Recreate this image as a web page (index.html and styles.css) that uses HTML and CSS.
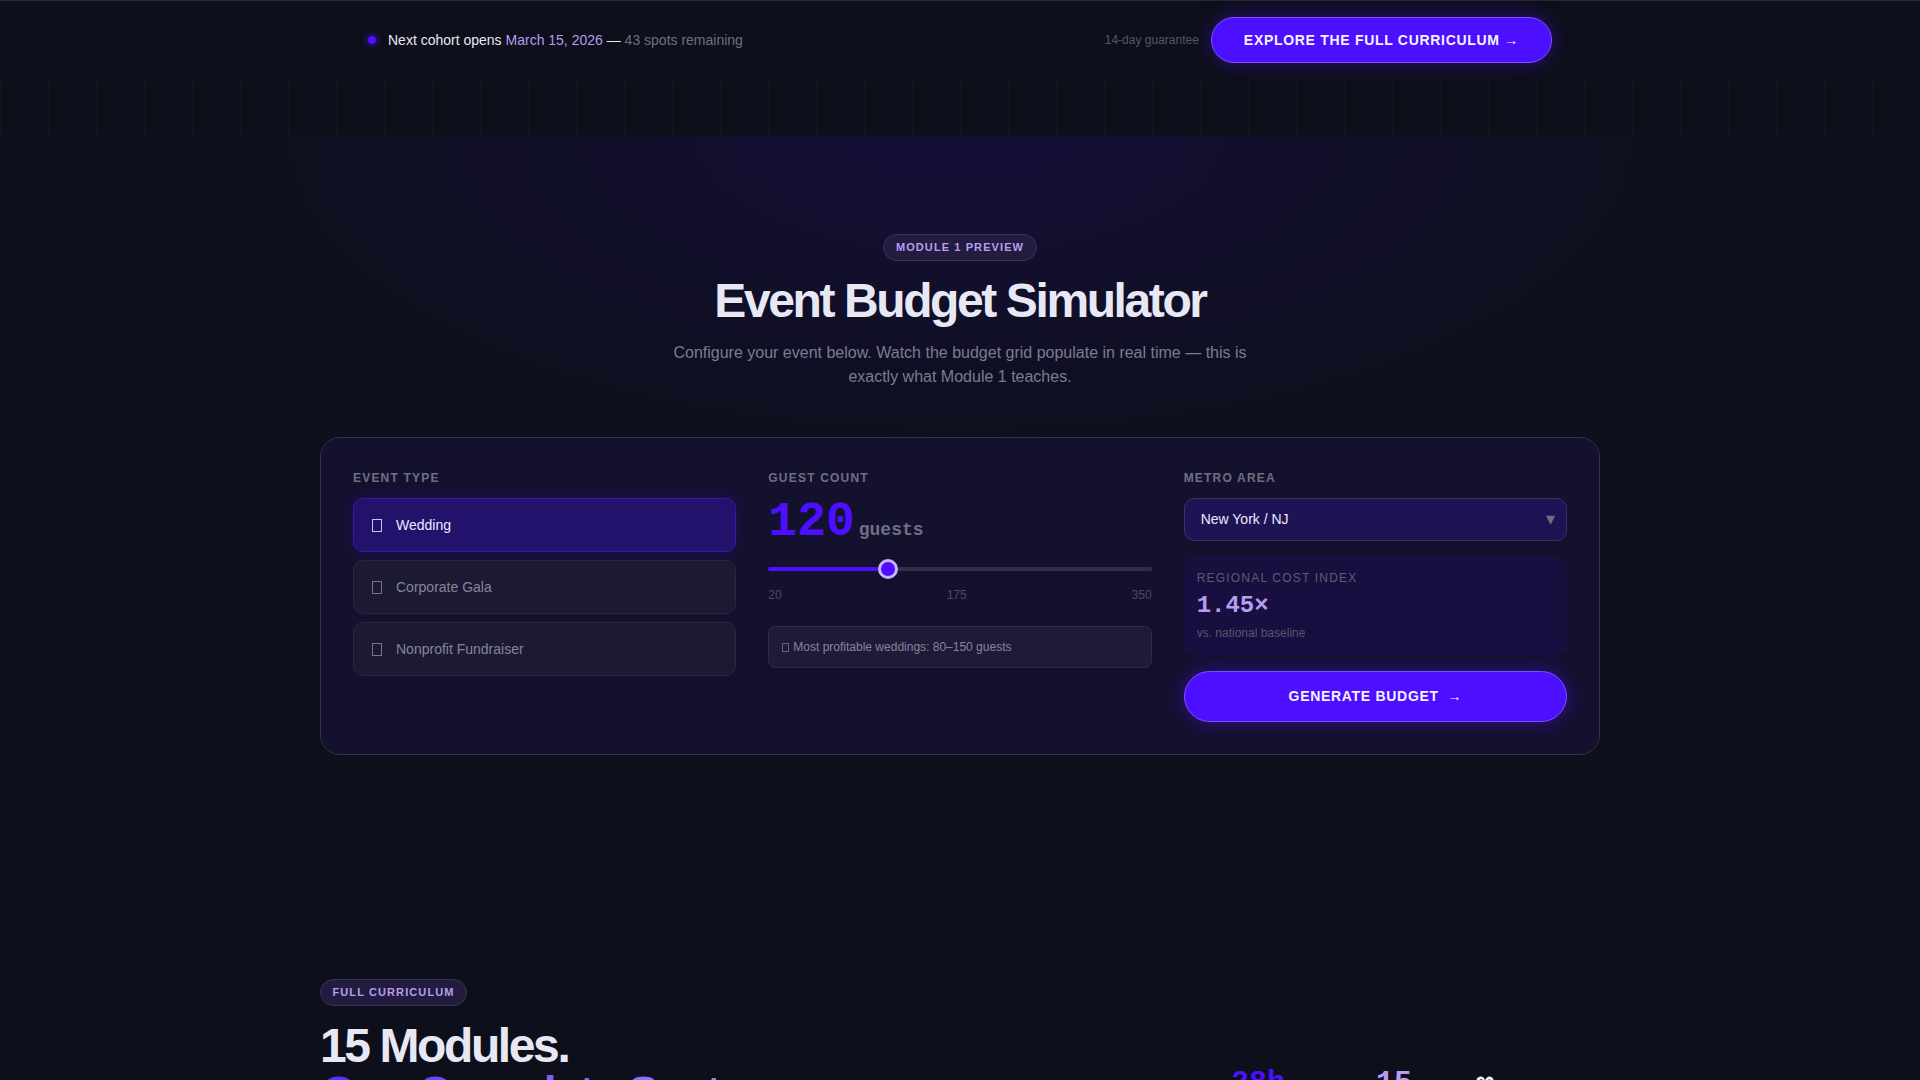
FILE: index.html
```html
<!DOCTYPE html>
<html lang="en">
<head>
    <meta charset="UTF-8">
    <meta name="viewport" content="width=device-width, initial-scale=1.0">
    <title>Event Budget Simulator</title>
    <link rel="stylesheet" href="styles.css">
</head>
<body>
    <header class="topbar">
        <div class="topbar-inner">
            <div class="cohort">
                <span class="cohort-dot"></span>
                <span>Next cohort opens <span class="cohort-date">March 15, 2026</span> — <span class="cohort-spots">43 spots remaining</span></span>
            </div>
            <div class="topbar-actions">
                <span class="guarantee">14-day guarantee</span>
                <a class="btn btn-top" href="#curriculum">Explore the Full Curriculum <span class="btn-arrow">→</span></a>
            </div>
        </div>
    </header>

    <div class="grid-strip"></div>

    <section class="simulator">
        <div class="section-head">
            <span class="pill">Module 1 Preview</span>
            <h2 class="sim-title">Event Budget Simulator</h2>
            <p class="sim-sub">Configure your event below. Watch the budget grid populate in real time — this is exactly what Module 1 teaches.</p>
        </div>

        <div class="sim-card">
            <div class="sim-col">
                <div class="field-label">Event Type</div>
                <div class="options">
                    <button class="option active"><span class="option-icon"></span>Wedding</button>
                    <button class="option"><span class="option-icon"></span>Corporate Gala</button>
                    <button class="option"><span class="option-icon"></span>Nonprofit Fundraiser</button>
                </div>
            </div>

            <div class="sim-col">
                <div class="field-label">Guest Count</div>
                <div class="guest-value">120<span class="guest-unit">guests</span></div>
                <input class="guest-range" type="range" min="20" max="350" value="120">
                <div class="range-labels"><span>20</span><span>175</span><span>350</span></div>
                <div class="hint"><span class="hint-icon"></span>Most profitable weddings: 80–150 guests</div>
            </div>

            <div class="sim-col">
                <div class="field-label">Metro Area</div>
                <div class="select-wrap">
                    <select class="metro-select">
                        <option>New York / NJ</option>
                        <option>Los Angeles</option>
                        <option>Chicago</option>
                    </select>
                </div>
                <div class="cost-box">
                    <div class="cost-label">Regional Cost Index</div>
                    <div class="cost-value">1.45×</div>
                    <div class="cost-note">vs. national baseline</div>
                </div>
                <button class="btn btn-generate">Generate Budget <span class="btn-arrow">→</span></button>
            </div>
        </div>
    </section>

    <section class="curriculum" id="curriculum">
        <div class="curriculum-head">
            <div>
                <span class="pill">Full Curriculum</span>
                <h2 class="curriculum-title">15 Modules.<br><span class="accent">One Complete System.</span></h2>
            </div>
            <div class="stats">
                <div class="stat stat-hours">28h</div>
                <div class="stat stat-modules">15</div>
                <div class="stat stat-access">∞</div>
            </div>
        </div>
    </section>
</body>
</html>
```

FILE: styles.css
```css
* {
    box-sizing: border-box;
}
html, body {
    height: 100%;
    overflow: hidden;
}
body {
    font-family: 'Liberation Sans', Arial, sans-serif;
    margin: 0;
    background-color: #0d0f1a;
    color: #e8e8f5;
}
.topbar {
    height: 80px;
    padding-bottom: 1px;
    border-top: 1px solid #252836;
    background-color: #0d0f1a;
}
.topbar-inner {
    max-width: 1184px;
    height: 100%;
    margin: 0 auto;
    display: flex;
    align-items: center;
    justify-content: space-between;
}
.cohort {
    display: flex;
    align-items: center;
    gap: 12px;
    font-size: 14px;
    color: #e8e8f5;
}
.cohort-dot {
    width: 8px;
    height: 8px;
    border-radius: 50%;
    background-color: #4d0fff;
    box-shadow: 0 0 8px #4d0fff;
}
.cohort-date {
    color: #b79cf0;
}
.cohort-spots {
    color: #6f6f82;
}
.topbar-actions {
    display: flex;
    align-items: center;
    gap: 12px;
}
.guarantee {
    font-size: 12px;
    color: #55566a;
}
.btn {
    display: block;
    border: 1px solid #7a50ff;
    border-radius: 999px;
    background-color: #4d0fff;
    color: #f5f2ff;
    font-family: inherit;
    font-weight: 700;
    font-size: 14px;
    letter-spacing: 0.05em;
    text-align: center;
    text-transform: uppercase;
    text-decoration: none;
    box-shadow: 0 0 20px rgba(77, 15, 255, 0.45);
}
.btn-arrow {
    margin-left: 4px;
    font-weight: 400;
}
.btn-top {
    padding: 14px 32px;
}
.btn-top .btn-arrow {
    margin-left: 0;
}
.grid-strip {
    height: 56px;
    background-image:
        linear-gradient(rgba(255, 255, 255, 0.012) 1px, transparent 1px),
        linear-gradient(90deg, rgba(255, 255, 255, 0.02) 1px, transparent 1px);
    background-size: 48px 48px;
}
.simulator {
    padding: 98px 0 224px;
    background: radial-gradient(ellipse 800px 350px at 50% 0, #140f38, transparent);
}
.section-head {
    text-align: center;
}
.pill {
    display: inline-block;
    padding: 7px 11.5px;
    border: 1px solid #3b3358;
    border-radius: 999px;
    background-color: #231c3f;
    color: #b79cf0;
    font-size: 11px;
    font-weight: 700;
    line-height: 11px;
    letter-spacing: 0.1em;
    text-transform: uppercase;
}
.sim-title {
    margin: 10px 0 10px;
    color: #e8e8f5;
    font-size: 48px;
    line-height: 60px;
    letter-spacing: -0.05em;
}
.sim-sub {
    width: 600px;
    margin: 0 auto;
    color: #7c7c90;
    font-size: 16px;
    line-height: 24px;
}
.sim-card {
    display: grid;
    grid-template-columns: repeat(3, 1fr);
    gap: 32px;
    width: 1280px;
    margin: 48px auto 0;
    padding: 32px;
    border: 1px solid #34324a;
    border-radius: 20px;
    background-color: #14112e;
}
.field-label {
    margin-bottom: 13px;
    padding-top: 1px;
    color: #6f6f82;
    font-size: 12px;
    font-weight: 700;
    line-height: 15px;
    letter-spacing: 0.1em;
    text-transform: uppercase;
}
.options {
    display: flex;
    flex-direction: column;
    gap: 8px;
    margin-top: -1px;
}
.option {
    display: flex;
    align-items: center;
    height: 54px;
    padding: 0 16px;
    border: 1px solid #29263f;
    border-radius: 10px;
    background-color: #1c1933;
    color: #85859a;
    font-family: inherit;
    font-size: 14px;
    text-align: left;
}
.option.active {
    border-color: #3a14b0;
    background-color: #23126b;
    color: #ece8ff;
    box-shadow: 0 0 16px rgba(77, 15, 255, 0.2);
}
/* missing-glyph box next to each option */
.option-icon {
    width: 10px;
    height: 13px;
    margin: 0 14px 0 2px;
    border: 1px solid currentColor;
    opacity: 0.85;
}
.guest-value {
    margin-top: -1px;
    color: #4d0fff;
    font-family: 'Liberation Mono', monospace;
    font-size: 48px;
    font-weight: 700;
    line-height: 48px;
}
.guest-unit {
    margin-left: 4px;
    color: #6f6f82;
    font-size: 18px;
    line-height: 18px;
}
.guest-range {
    display: block;
    width: 100%;
    height: 4px;
    margin: 21px 0 0;
    border-radius: 2px;
    background: linear-gradient(90deg, #4d0fff 0, #4d0fff 31%, #322e4d 31%, #322e4d 100%);
    appearance: none;
    -webkit-appearance: none;
}
.guest-range::-webkit-slider-thumb {
    width: 20px;
    height: 20px;
    border: 3px solid #c9b3ff;
    border-radius: 50%;
    background-color: #4d0fff;
    appearance: none;
    -webkit-appearance: none;
}
.range-labels {
    display: flex;
    justify-content: space-between;
    margin-top: 17px;
    color: #4c4c60;
    font-size: 12px;
    line-height: 14px;
}
.hint {
    display: flex;
    align-items: center;
    margin-top: 24px;
    padding: 13px 13px;
    border: 1px solid #2f2b47;
    border-radius: 8px;
    background-color: #1f1a38;
    color: #85859a;
    font-size: 12px;
    line-height: 14px;
}
.hint-icon {
    width: 7px;
    height: 9px;
    margin-right: 4px;
    border: 1px solid currentColor;
    opacity: 0.7;
}
.select-wrap {
    position: relative;
    margin-top: -1px;
}
.select-wrap::after {
    content: "▾";
    position: absolute;
    top: 10px;
    right: 12px;
    color: #6f6f82;
    font-size: 18px;
    line-height: 22px;
    pointer-events: none;
}
.metro-select {
    display: block;
    width: 100%;
    height: 43px;
    padding: 0 16px 2px;
    border: 1px solid #3b3358;
    border-radius: 10px;
    background-color: #1e1455;
    color: #ece8ff;
    font-family: inherit;
    font-size: 14px;
    appearance: none;
    -webkit-appearance: none;
}
.cost-box {
    height: 98px;
    margin-top: 16px;
    padding: 13px 12px;
    border: 1px solid #1b1440;
    border-radius: 10px;
    background-color: #170f3f;
}
.cost-label {
    color: #5e5c75;
    font-size: 12px;
    line-height: 14px;
    letter-spacing: 0.1em;
    text-transform: uppercase;
}
.cost-value {
    margin-top: 7px;
    color: #b79cf0;
    font-family: 'Liberation Mono', monospace;
    font-size: 24px;
    font-weight: 700;
    line-height: 28px;
}
.cost-note {
    margin-top: 6px;
    color: #57556f;
    font-size: 12px;
    line-height: 14px;
}
.btn-generate {
    width: 100%;
    height: 51px;
    margin-top: 16px;
    padding-bottom: 3px;
}
.curriculum {
    width: 1280px;
    margin: 0 auto;
}
.curriculum-head {
    display: flex;
    justify-content: space-between;
    align-items: flex-start;
}
.curriculum-title {
    margin: 16px 0 0;
    color: #e8e8f5;
    font-size: 48px;
    line-height: 48px;
    letter-spacing: -0.05em;
}
.accent {
    background: linear-gradient(90deg, #5f2bff, #a98bf0);
    -webkit-background-clip: text;
    background-clip: text;
    color: transparent;
}
.stats {
    display: grid;
    grid-template-columns: 145px 100px 124px;
    margin-top: 88px;
}
.stat {
    font-family: 'Liberation Mono', monospace;
    font-size: 30px;
    font-weight: 700;
    line-height: 32px;
}
.stat-hours {
    color: #4d0fff;
}
.stat-modules {
    color: #b79cf0;
}
.stat-access {
    color: #f5f2ff;
}
```
